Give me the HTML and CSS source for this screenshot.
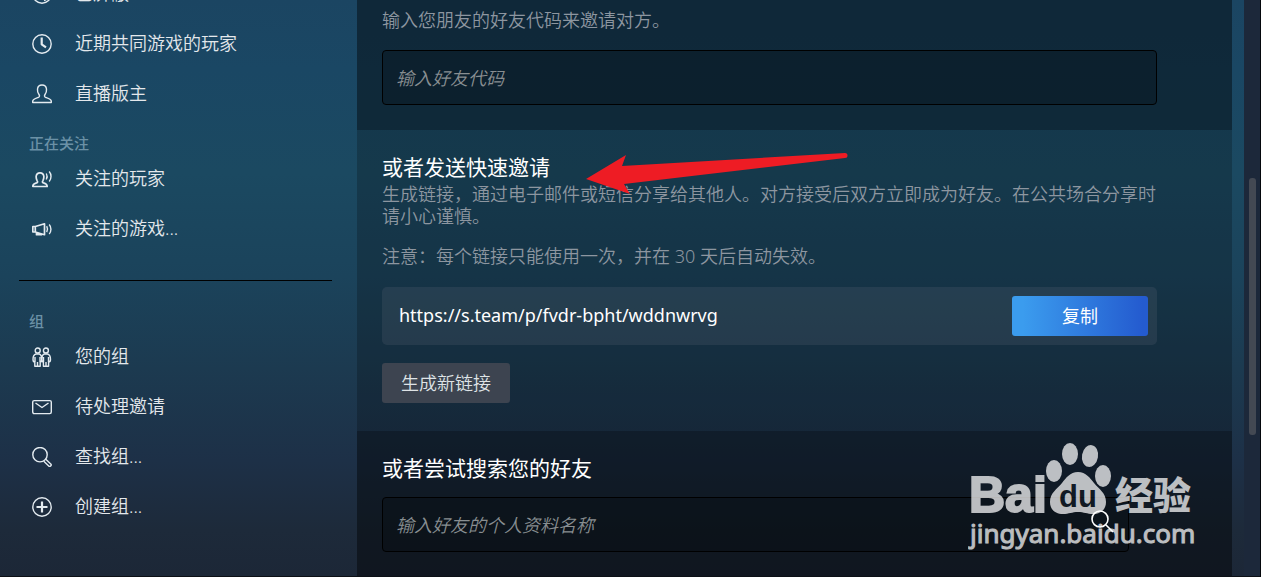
FILE: index.html
```html
<!DOCTYPE html>
<html lang="zh-CN">
<head>
    <meta charset="UTF-8">
    <title>添加好友</title>
    <link rel="stylesheet" href="styles.css">
</head>
<body>
    <div class="page">
        <nav class="sidebar">
            <a class="nav-item" href="#">
                <svg viewBox="0 0 20 20"><circle cx="10" cy="10" r="9.2"/><path d="M12 16.500c2-.6 3.500-2 4.500-4"/></svg>
                <span>已屏蔽</span>
            </a>
            <a class="nav-item" href="#">
                <svg viewBox="0 0 20 20"><circle cx="10" cy="10" r="9.200"/><path class="thick" d="M9.700 3.500v6.800l4.300 3"/></svg>
                <span>近期共同游戏的玩家</span>
            </a>
            <a class="nav-item" href="#">
                <svg viewBox="0 0 20 20"><path d="M.7 18.500v-1.300c0-2.200 3-3 5.300-3.700 1.500-.5 2-1.500 1-3C5.500 8.500 5.300 6.800 5.500 5 5.800 2.400 7.700 1 10 1s4.200 1.400 4.500 4c.2 1.800 0 3.500-1.500 5.500-1 1.500-.5 2.500 1 3 2.300.7 5.300 1.500 5.300 3.700v1.300z"/></svg>
                <span>直播版主</span>
            </a>

            <h2 class="nav-label">正在关注</h2>
            <a class="nav-item" href="#">
                <svg viewBox="0 0 20 20"><path class="mid" d="M.8 17.500c0-2.300 1.500-3 3.700-3.600 1.300-.4 1.300-1.200.6-2.300C4.200 10 4 9 4.200 7.200 4.500 5 6 3.800 8 3.800s3.500 1.200 3.800 3.400c.2 1.800 0 2.800-.9 4.400-.7 1.100-.7 1.900.6 2.300 2.200.6 3.700 1.300 3.700 3.600z"/><path d="M14.300 4.500c1 1.800 1 4.200 0 6M17.200 2.500c2.400 2.800 2.400 7.200 0 10"/></svg>
                <span>关注的玩家</span>
            </a>
            <a class="nav-item" href="#">
                <svg viewBox="0 0 20 20"><path class="mid" d="M.8 7.500h2.500v5.500H.8zM3.300 7.500L12.500 4.800v10.900L3.300 13M4.500 13.400v2.300h5v-.8"/><path d="M14.700 7.200c1 1.800 1 4.200 0 6M17.200 5.500c2.300 2.500 2.300 7 0 9.400"/></svg>
                <span>关注的游戏...</span>
            </a>

            <hr>

            <h2 class="nav-label">组</h2>
            <a class="nav-item" href="#">
                <svg viewBox="0 0 20 20"><circle cx="5.700" cy="3.500" r="2.500"/><circle cx="13.900" cy="3.500" r="2.500"/><path d="M4 7c-2.300.5-3 3-3 5.500 0 1.500.7 2.500 1.800 2.500v4.300h5.400V15c1.100 0 1.500-1 1.500-2.500C9.700 10 9.500 7.500 7.300 7zM12.300 7c-2.200.5-2.500 3-2.500 5.500 0 1.500.5 2.500 1.600 2.500v4.300h5.200V15c1.100 0 1.900-1 1.900-2.500 0-2.500-.7-5-3-5.500zM3 10v5M8 10v5M5.500 15v4M11.500 10v5M16.500 10v5M14 15v4"/></svg>
                <span>您的组</span>
            </a>
            <a class="nav-item" href="#">
                <svg viewBox="0 0 20 20"><rect x=".7" y="3.600" width="18.600" height="13" rx="1.500"/><path d="M3.500 6l6.500 4.500L16.500 6"/></svg>
                <span>待处理邀请</span>
            </a>
            <a class="nav-item" href="#">
                <svg viewBox="0 0 20 20"><circle cx="8" cy="7.700" r="7.200"/><path d="M11.800 14.200l5.200 5c1 .8 2.800-.8 2-2l-5.200-5"/></svg>
                <span>查找组...</span>
            </a>
            <a class="nav-item" href="#">
                <svg viewBox="0 0 20 20"><circle cx="10" cy="10" r="9.200"/><path class="thick" d="M10 4.500v11M4.500 10h11"/></svg>
                <span>创建组...</span>
            </a>
        </nav>

        <main class="content">
            <section class="panel panel-dark panel-code">
                <p><label for="friend-code">输入您朋友的好友代码来邀请对方。</label></p>
                <input id="friend-code" class="field" type="text" placeholder="输入好友代码">
            </section>

            <section class="panel panel-invite">
                <h1>或者发送快速邀请</h1>
                <p>生成链接，通过电子邮件或短信分享给其他人。对方接受后双方立即成为好友。在公共场合分享时请小心谨慎。</p>
                <p class="note">注意：每个链接只能使用一次，并在 30 天后自动失效。</p>
                <div class="link-box">
                    <span>https://s.team/p/fvdr-bpht/wddnwrvg</span>
                    <button class="btn-copy" type="button">复制</button>
                </div>
                <button class="btn-new" type="button">生成新链接</button>
            </section>

            <section class="panel panel-dark panel-search">
                <h1><label for="friend-name">或者尝试搜索您的好友</label></h1>
                <div class="search-box">
                    <input id="friend-name" class="field" type="text" placeholder="输入好友的个人资料名称">
                    <svg class="search-icon" viewBox="0 0 24 24"><circle cx="10" cy="10" r="8"/><path d="M16 16l7 7"/></svg>
                </div>
            </section>
        </main>

        <div class="scrollbar"><div class="thumb"></div></div>
    </div>

    <!-- arrow pointing at the quick invite heading -->
    <svg class="arrow" viewBox="0 0 264 42">
        <path d="M1 27L41 3l-4 11L260 1a2.500 2.500 0 0 1 0 5L39 32l6 10z"/>
    </svg>

    <svg class="watermark" viewBox="0 0 230 114">
        <text class="wm-brand" x="1" y="71">Bai</text>
        <ellipse cx="86" cy="30" rx="8" ry="11"/>
        <ellipse cx="102" cy="13" rx="8" ry="11"/>
        <ellipse cx="122" cy="15" rx="8" ry="11" transform="rotate(10 122 15)"/>
        <ellipse cx="135" cy="35" rx="8" ry="11"/>
        <path d="M110 31c8 0 12 6 16 11 5 6 12 10 12 19 0 8-6 12-13 12-6 0-9-2-15-2s-9 2-15 2c-7 0-13-4-13-12 0-9 7-13 12-19 4-5 8-11 16-11z"/>
        <text class="wm-du" x="91" y="66">du</text>
        <text class="wm-cn" x="147" y="68">经验</text>
        <text class="wm-url" x="2" y="102">jingyan.baidu.com</text>
    </svg>
</body>
</html>
```

FILE: styles.css
```css
* {
    box-sizing: border-box;
}
body {
    margin: 0;
    background: #1b2838;
    color: #fff;
    font-family: "Noto Sans", "Noto Sans CJK SC", sans-serif;
    font-size: 18px;
    font-weight: 350;
    line-height: 22px;
}
h1, h2, p {
    margin: 0;
}
input, button {
    font: inherit;
}
.page {
    display: flex;
    height: 100vh;
    overflow: hidden;
    border-right: 1px solid #05080c;
    border-bottom: 1px solid #0c1016;
    background: linear-gradient(180deg, #1b4562 0%, #1a4764 12%, #1b4961 30%, #1b435b 48%, #1c3a50 64%, #1d3047 80%, #1d2a3a 92%, #1c2737 100%);
}

/* left menu */
.sidebar {
    flex: 0 0 357px;
    margin-top: -31px;
}
.nav-item {
    display: flex;
    align-items: center;
    gap: 23px;
    height: 50px;
    padding-left: 32px;
    color: #e4e8ec;
    text-decoration: none;
}
.nav-item span {
    padding-bottom: 2px;
}
.nav-item svg {
    width: 20px;
    height: 20px;
    fill: none;
    stroke: #e4ebf0;
    stroke-width: 1.4;
    stroke-linejoin: round;
}
.nav-item .thick {
    stroke-width: 2.2;
}
.nav-item .mid {
    stroke-width: 1.7;
}
.nav-label {
    height: 35px;
    padding: 14px 0 0 29px;
    color: #6b91a6;
    font-size: 15px;
    font-weight: 500;
    line-height: 20px;
}
.sidebar hr {
    height: 1px;
    margin: 26px 25px 16px 19px;
    border: 0;
    background: #000;
}

/* right column */
.content {
    flex: 1;
    display: flex;
    flex-direction: column;
    margin-right: 12px;
}
.panel {
    padding: 23px 75px 28px 25px;
    background: rgba(0, 0, 0, 0.22);
}
.panel-dark {
    background: rgba(0, 0, 0, 0.42);
}
.panel-code {
    padding-top: 9px;
    padding-bottom: 25px;
}
.panel-search {
    flex: 1;
}
.panel h1 {
    font-size: 21px;
    font-weight: 400;
    line-height: 28px;
}
.panel p {
    color: #8d96a0;
}
.panel h1 + p {
    margin-top: 2px;
}
.panel .note {
    margin-top: 18px;
}
.field {
    display: block;
    width: 100%;
    height: 55px;
    padding: 0 13px;
    border: 1px solid #000;
    border-radius: 4px;
    background: rgba(0, 0, 0, 0.2);
    color: #fff;
}
.field::placeholder {
    color: #888e91;
    font-style: italic;
    opacity: 1;
}
.panel-code .field {
    margin-top: 19px;
}
.link-box {
    display: flex;
    align-items: center;
    justify-content: space-between;
    height: 58px;
    margin-top: 20px;
    padding: 0 9px 0 17px;
    border-radius: 5px;
    background: rgba(103, 112, 123, 0.2);
    font-weight: 400;
}
.link-box span {
    padding-bottom: 2px;
}
.btn-copy, .btn-new {
    height: 40px;
    border: 0;
    border-radius: 3px;
    color: #fff;
}
.btn-copy {
    width: 136px;
    background: linear-gradient(90deg, #3b9cee 8%, #245bcf 96%);
}
.btn-new {
    display: block;
    margin-top: 18px;
    padding: 0 19px;
    background: #3d4450;
    color: #dfe3e6;
}
.search-box {
    position: relative;
    margin: 15px 28px 0 0;
}
.search-icon {
    position: absolute;
    right: 15px;
    top: 12px;
    width: 24px;
    height: 24px;
    fill: none;
    stroke: #fff;
    stroke-width: 1.6;
}

.scrollbar {
    flex: 0 0 16px;
    padding: 178px 4px 0 5px;
    background: #1c283a;
}
.thumb {
    height: 257px;
    border-radius: 3px;
    background: #434953;
}

/* overlays */
.arrow {
    position: absolute;
    left: 585px;
    top: 152px;
    width: 264px;
    height: 42px;
    fill: #ee1c24;
}
.watermark {
    position: absolute;
    right: 63px;
    bottom: 22px;
    width: 230px;
    height: 114px;
    fill: #fff;
    opacity: 0.72;
}
.wm-brand {
    font: bold 50px "Liberation Sans", sans-serif;
    stroke: #fff;
    stroke-width: 2;
}
.wm-du {
    fill: #131c26;
    font: bold 31px "Liberation Sans", sans-serif;
}
.wm-cn {
    font: 900 38px "Noto Sans CJK SC", sans-serif;
}
.wm-url {
    font: 400 26px "Noto Sans", sans-serif;
    stroke: #fff;
    stroke-width: 1;
}
```
